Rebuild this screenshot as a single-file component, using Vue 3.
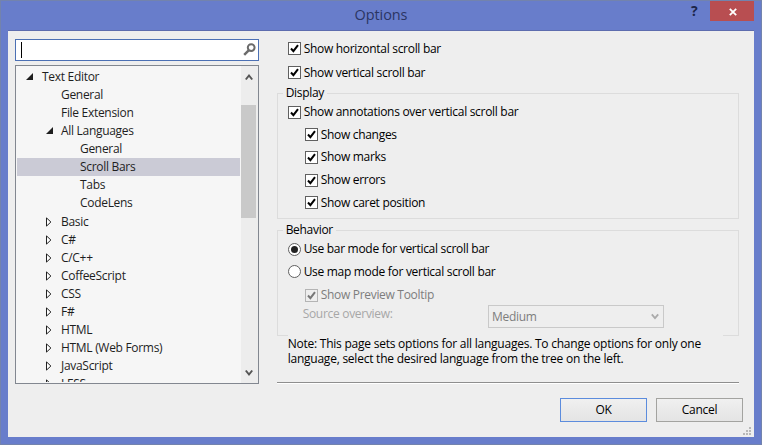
<script setup>
import { ref } from 'vue'

const tree = [
  { label: 'Text Editor', level: 0, state: 'open' },
  { label: 'General', level: 1 },
  { label: 'File Extension', level: 1 },
  { label: 'All Languages', level: 1, state: 'open' },
  { label: 'General', level: 2 },
  { label: 'Scroll Bars', level: 2, selected: true },
  { label: 'Tabs', level: 2 },
  { label: 'CodeLens', level: 2 },
  { label: 'Basic', level: 1, state: 'closed' },
  { label: 'C#', level: 1, state: 'closed' },
  { label: 'C/C++', level: 1, state: 'closed' },
  { label: 'CoffeeScript', level: 1, state: 'closed' },
  { label: 'CSS', level: 1, state: 'closed' },
  { label: 'F#', level: 1, state: 'closed' },
  { label: 'HTML', level: 1, state: 'closed' },
  { label: 'HTML (Web Forms)', level: 1, state: 'closed' },
  { label: 'JavaScript', level: 1, state: 'closed' },
  { label: 'LESS', level: 1, state: 'closed' }
]
const bars = ['Show horizontal scroll bar', 'Show vertical scroll bar']
const annotations = ['Show changes', 'Show marks', 'Show errors', 'Show caret position']
const modes = [
  { id: 'bar', label: 'Use bar mode for vertical scroll bar' },
  { id: 'map', label: 'Use map mode for vertical scroll bar' }
]
const mode = ref('bar')
</script>

<template>
  <div class="window">
    <header class="titlebar">
      <span class="title">Options</span>
      <span class="help">?</span>
      <button class="close" aria-label="Close">
        <svg width="8" height="8" viewBox="0 0 8 8"><path d="M.8.8 7.2 7.2M7.2.8.8 7.2" stroke="#fff" stroke-width="1.8" /></svg>
      </button>
    </header>
    <main class="client">
      <aside class="side">
        <div class="search">
          <i class="caret"></i>
          <svg width="13" height="13" viewBox="0 0 13 13" fill="none" stroke="#6b6b6b">
            <circle cx="8.2" cy="4.6" r="3.4" stroke-width="2" />
            <path d="M5.7 7.3 1.2 11.8" stroke-width="2.5" />
          </svg>
        </div>
        <div class="tree">
          <ul class="items">
            <li v-for="(n, i) in tree" :key="i" :class="['node', 'l' + n.level, { selected: n.selected }]">
              <span class="twisty">
                <svg v-if="n.state === 'open'" width="8" height="8" viewBox="0 0 8 8"><path d="M7 0V7H0Z" fill="#1e1e1e" /></svg>
                <svg v-else-if="n.state === 'closed'" width="6" height="10" viewBox="0 0 6 10"><path d="M.5 .9V9.1L4.9 5Z" fill="#fff" stroke="#222" /></svg>
              </span>
              <span>{{ n.label }}</span>
            </li>
          </ul>
          <div class="scrollbar">
            <svg class="arrow" width="8" height="8" viewBox="0 0 8 8"><path d="M.8 6.5 4 2.5 7.2 6.5" fill="none" stroke="#555" stroke-width="2" /></svg>
            <div class="thumb"></div>
            <svg class="arrow down" width="8" height="8" viewBox="0 0 8 8"><path d="M.8 1.5 4 5.5 7.2 1.5" fill="none" stroke="#555" stroke-width="2" /></svg>
          </div>
        </div>
      </aside>

      <section class="page">
        <div class="top">
          <label v-for="b in bars" :key="b" class="row">
            <span class="box"><svg viewBox="0 0 11 11"><path d="M2 5.5 4.4 8.2 9 2.1" /></svg></span>{{ b }}
          </label>
        </div>
        <fieldset class="display">
          <legend>Display</legend>
          <label class="row">
            <span class="box"><svg viewBox="0 0 11 11"><path d="M2 5.5 4.4 8.2 9 2.1" /></svg></span>Show annotations over vertical scroll bar
          </label>
          <label v-for="a in annotations" :key="a" class="row sub">
            <span class="box"><svg viewBox="0 0 11 11"><path d="M2 5.5 4.4 8.2 9 2.1" /></svg></span>{{ a }}
          </label>
        </fieldset>
        <fieldset class="behavior">
          <legend>Behavior</legend>
          <label v-for="m in modes" :key="m.id" class="row" @click="mode = m.id">
            <span class="radio"><i v-if="mode === m.id"></i></span>{{ m.label }}
          </label>
          <label class="row sub disabled">
            <span class="box"><svg viewBox="0 0 11 11"><path d="M2 5.5 4.4 8.2 9 2.1" /></svg></span>Show Preview Tooltip
          </label>
          <div class="overview">
            <span class="caption">Source overview:</span>
            <div class="select">
              <span>Medium</span>
              <svg width="8" height="7" viewBox="0 0 8 7"><path d="M.8 1.3 4 5 7.2 1.3" fill="none" stroke="#aaa" stroke-width="1.8" /></svg>
            </div>
          </div>
        </fieldset>
        <div class="note">
          <div>Note: This page sets options for all languages. To change options for only one</div>
          <div>language, select the desired language from the tree on the left.</div>
        </div>
        <hr />
        <footer>
          <button class="btn primary">OK</button>
          <button class="btn">Cancel</button>
        </footer>
      </section>
      <svg class="grip" width="8" height="8" viewBox="0 0 8 8" fill="#b8b8b8">
        <path d="M6 0h2v2H6zM3 3h2v2H3zM6 3h2v2H6zM0 6h2v2H0zM3 6h2v2H3zM6 6h2v2H6z" />
      </svg>
    </main>
  </div>
</template>

<style>
body { margin: 0; overflow: hidden; }
</style>

<style scoped>
* { box-sizing: border-box; }
.window {
  width: 762px; height: 445px; padding: 0 7px 7px; display: flex; flex-direction: column;
  background: #687dcb; border: 1px solid #7383ad;
  font-family: "Open Sans", "Noto Sans", sans-serif; font-size: 12px; letter-spacing: -.3px; color: #000;
  line-height: 16px; white-space: nowrap;
}
.titlebar { height: 29px; flex: none; display: grid; grid-template-columns: 1fr 24px 44px; align-items: start; }
.title { padding: 4px 0 0 68px; text-align: center; font-size: 14.5px; line-height: 20px; color: #2b3563; letter-spacing: -.1px; }
.help { padding: 2px 0 0 5px; font-size: 14px; font-weight: 700; color: #1c2549; }
.close { height: 20px; padding: 2px 0 0 2px; border: 0; background: #b84e51; display: grid; place-items: center; }
.client { position: relative; flex: 1; display: flex; background: #eee; border: 1px solid #5d6cae; border-width: 1px 0 0; padding: 8px 15px 0 7px; gap: 18px; }
.side { width: 244px; display: flex; flex-direction: column; gap: 4px; }
.search { height: 22px; display: flex; align-items: center; justify-content: space-between; padding: 0 2px 0 5px; background: #fff; border: 1px solid #4c70b4; }
.search svg { margin-top: -2px; }
.caret { width: 1px; height: 16px; background: #000; }
.tree { height: 319px; display: flex; background: #f6f6f6; border: 1px solid #828790; overflow: hidden; }
.items { flex: 1; height: 316px; margin: 0; padding: 1.9px 1px 0; list-style: none; overflow: hidden; color: #1e1e1e; }
.node { height: 18.08px; display: flex; align-items: center; }
.node.selected { background: #cbcbd6; }
.twisty { width: 16px; display: flex; }
.l0 { padding-left: 9px; }
.l1 { padding-left: 28px; }
.l2 { padding-left: 47px; }
.node.l1 .twisty { padding-left: 1px; }
.scrollbar { width: 17px; display: flex; flex-direction: column; background: #ededed; }
.arrow { margin: 7px 4px 0; flex: none; }
.thumb { width: 15px; height: 113px; margin-top: 24px; background: #c9c9c9; }
.down { margin: auto 4px 6px; }
.page { width: 463px; display: flex; flex-direction: column; }
.row { display: flex; align-items: center; height: 22.6px; padding-left: 10px; gap: 3px; }
.sub { padding-left: 27px; }
.top { padding-left: 1px; margin-top: -2.5px; margin-bottom: -.5px; }
.top .row { height: 24px; }
.box { width: 13px; height: 13px; flex: none; display: block; background: #fff; border: 1px solid #606060; }
.box svg { display: block; width: 11px; height: 11px; fill: none; stroke: #000; stroke-width: 2; }
.disabled { color: #7d7d7d; height: 24px; }
.disabled .box { background: #eee; border-color: #b4b4b4; }
.disabled .box svg { stroke: #777; }
.radio { width: 13px; height: 13px; flex: none; border: 1px solid #606060; border-radius: 50%; background: #fff; display: grid; place-items: center; }
.radio i { width: 7px; height: 7px; border-radius: 50%; background: #222; }
fieldset { margin: 0; padding: 0; min-width: 0; border: 1px solid #dcdcdc; }
legend { height: 16px; margin-left: 5px; padding: 0 3px; }
.display { margin-top: 1px; height: 134px; }
.behavior { margin-top: 3px; height: 114px; }
.overview { display: flex; justify-content: space-between; margin-top: -2px; padding: 0 74px 0 25px; }
.caption { color: #a7a7a7; margin-top: 1px; }
.select { width: 176px; height: 23px; border: 1px solid #c9c9c9; display: flex; align-items: center; justify-content: space-between; padding: 0 4px 0 3px; color: #7d7d7d; }
.note { width: 435px; position: relative; margin: -1px 0 0 11px; letter-spacing: -.235px; background: #eee; }
.note div { height: 15px; line-height: 15px; padding-top: 1px; }
hr { width: 100%; height: 2px; margin: 17px 0 0; border: 0; border-top: 1px solid #8e8e8e; background: #fff; flex: none; }
footer { display: flex; justify-content: flex-end; gap: 9px; margin: 14px -4px 0 0; }
.btn { height: 24px; width: 87px; padding: 0; border: 1px solid #a3a3a0; background: linear-gradient(#f0f0f0, #e4e4e4); font: inherit; letter-spacing: inherit; color: #000; }
.primary { border-color: #5c8cdd; }
.grip { position: absolute; right: 3px; bottom: 2px; }
</style>
